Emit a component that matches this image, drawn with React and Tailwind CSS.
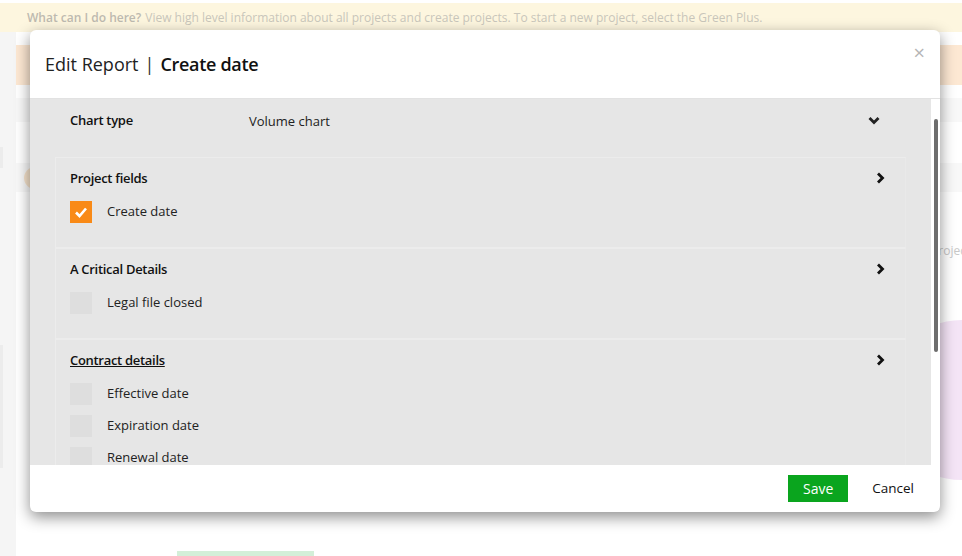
import React from "react";

const font = { fontFamily: '"Open Sans", "Noto Sans", sans-serif' };

const ChevronRight = () => (
  <svg width="9" height="12" viewBox="0 0 9 12" className="block">
    <polyline points="2,1.5 6.5,6 2,10.5" fill="none" stroke="#111" strokeWidth="2.8" />
  </svg>
);

const ChevronDown = () => (
  <svg width="12" height="9" viewBox="0 0 12 9" className="block">
    <polyline points="1.5,2 6,6.5 10.5,2" fill="none" stroke="#222" strokeWidth="2.8" />
  </svg>
);

const Checkbox = ({ checked }) =>
  checked ? (
    <div className="flex h-[22px] w-[22px] shrink-0 items-center justify-center bg-[#f98a17]">
      <svg width="14" height="12" viewBox="0 0 14 12">
        <polyline points="2,6.5 5.5,10 12,2.5" fill="none" stroke="#fff" strokeWidth="2.6" />
      </svg>
    </div>
  ) : (
    <div className="h-[22px] w-[22px] shrink-0 bg-[#dedede]" />
  );

const sections = [
  { title: "Project fields", items: [{ label: "Create date", checked: true }] },
  { title: "A Critical Details", items: [{ label: "Legal file closed" }] },
  {
    title: "Contract details",
    underline: true,
    items: [{ label: "Effective date" }, { label: "Expiration date" }, { label: "Renewal date" }],
  },
];

export default function App() {
  return (
    <div className="relative h-[556px] w-[962px] overflow-hidden bg-white" style={font}>
      {/* PAGE BEHIND */}
      <div className="pt-[3px]">
        <div className="flex h-[29px] items-center bg-[#fdf6df] pl-[27px] text-[12px] text-[#c9c6bb]">
          <span className="font-semibold text-[#bdbab0]">What can I do here?</span>
          <span className="ml-1">
            View high level information about all projects and create projects. To start a new project, select the Green Plus.
          </span>
        </div>
      </div>
      <div className="flex">
        <div className="flex w-[16px] flex-col bg-[#f5f5f5]">
          <div className="mt-[115px] h-[21px] w-[3px] bg-[#ececec]" />
          <div className="mt-[177px] h-[123px] w-[3px] bg-[#ececec]" />
        </div>
        <div className="flex-1">
          <div className="mt-[13px] h-[40px] bg-[#fde8d3]" />
          <div className="mt-[13px] h-[24px] bg-[#f8f8f8]" />
          <div className="mt-[41px] flex h-[29px] items-center bg-[#f8f8f8]">
            <div className="ml-[8px] h-[22px] w-[22px] rounded-full bg-[#f6e3cc]" />
          </div>
          <div className="mt-[50px] flex justify-end text-[12px] text-[#c8c8c8]">
            <span className="-mr-[14px] whitespace-nowrap">Projects</span>
          </div>
          <div className="mt-[60px] flex justify-end">
            <div className="-mr-[150px] h-[160px] w-[230px] rounded-full bg-[#f4e4f6]" />
          </div>
          <div className="mt-[71px] ml-[161px] h-[5px] w-[137px] bg-[#d3efd8]" />
        </div>
      </div>

      {/* MODAL */}
      <div className="absolute left-[30px] top-[30px] flex h-[482px] w-[910px] flex-col overflow-hidden rounded-[6px] bg-white shadow-[0_5px_15px_rgba(0,0,0,0.45)]">
        <div className="relative flex h-[69px] shrink-0 items-center border-b border-[#e2e2e2] px-[15px] text-[18px] text-[#222]">
          <span>Edit Report</span>
          <span className="mx-[6px] text-[#333]">|</span>
          <span className="font-semibold tracking-[-0.3px] text-[#111]">Create date</span>
          <span className="absolute right-[15px] top-[13px] text-[20px] leading-none text-[#b5b5b5]">×</span>
        </div>

        <div className="flex h-[366px] shrink-0">
          <div className="flex-1 overflow-hidden bg-[#e6e6e6]">
            <div className="flex h-[58px] items-start pl-[40px] pr-[51px] pt-[12px] text-[13px] leading-[18px]">
              <div className="w-[179px] font-semibold tracking-[-0.3px] text-[#111]">Chart type</div>
              <div className="flex-1 pt-[1px] text-[#222]">Volume chart</div>
              <div className="pt-[5px]">
                <ChevronDown />
              </div>
            </div>

            <div className="mx-[25px]">
              {sections.map((s) => (
                <div
                  key={s.title}
                  className="min-h-[91px] border border-[#ececec] border-r-[#e9e9e9] pl-[14px] pr-[20px] pt-[11px]"
                >
                  <div className="flex items-center justify-between text-[13px] leading-[18px]">
                    <span className={`font-semibold tracking-[-0.3px] text-[#111] ${s.underline ? "underline" : ""}`}>
                      {s.title}
                    </span>
                    <ChevronRight />
                  </div>
                  <div className="mt-[14px] flex flex-col gap-[10px]">
                    {s.items.map((it) => (
                      <div key={it.label} className="flex items-center gap-[15px] text-[13px] text-[#222]">
                        <Checkbox checked={it.checked} />
                        <span>{it.label}</span>
                      </div>
                    ))}
                  </div>
                </div>
              ))}
            </div>
          </div>
          <div className="w-[9px] bg-white pl-[3px] pt-[20px]">
            <div className="h-[233px] w-[4px] rounded-sm bg-[#6d6d6d]" />
          </div>
        </div>

        <div className="flex flex-1 items-start justify-end gap-[24px] pr-[26px] pt-[10px]">
          <button className="h-[27px] w-[60px] bg-[#0aa51e] text-[14px] text-white">Save</button>
          <button className="h-[27px] text-[13.5px] text-[#111]">Cancel</button>
        </div>
      </div>
    </div>
  );
}
